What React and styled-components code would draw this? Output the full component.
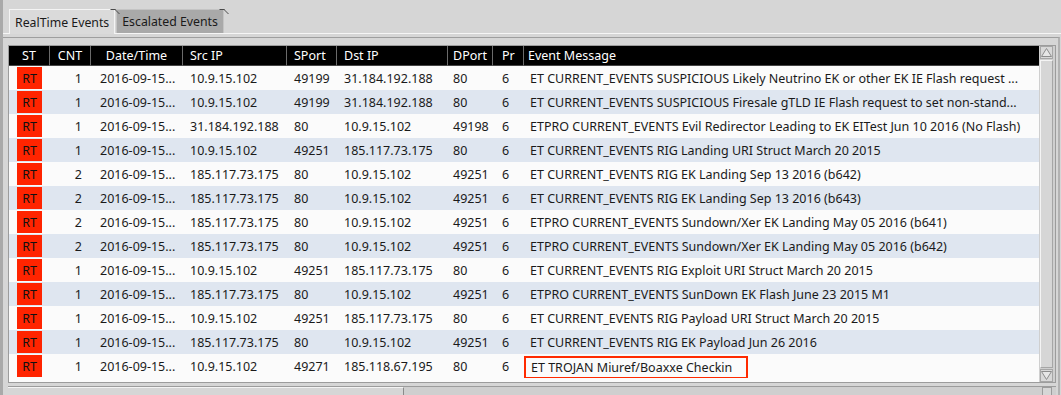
import React from 'react'
import styled, { createGlobalStyle } from 'styled-components'

const GlobalStyle = createGlobalStyle`
  html, body {
    margin: 0;
    padding: 0;
    background: #d6d6d6;
    overflow: hidden;
  }
  body {
    font-family: "Noto Sans", "Open Sans", sans-serif;
    font-size: 12px;
    color: #111;
  }
`

const Window = styled.div`
  width: 1061px;
  height: 395px;
  box-sizing: border-box;
  border-left: 3px solid #a9a9a9;
  background: #d6d6d6;
  overflow: hidden;
`

const TabBar = styled.div`
  display: flex;
  padding: 9px 0 0 6px;
  height: 24px;
`

const Tab = styled.div`
  position: relative;
  display: flex;
  align-items: center;
  box-sizing: border-box;
  padding: 0 5px 0 5px;
  margin-right: 1px;
  font-size: 12.3px;
  color: #1a1a1a;
  background: ${p => (p.$active ? '#dadada' : '#a9a9a9')};
  border: 1px solid ${p => (p.$active ? '#f4f4f4' : '#c4c4c4')};
  border-bottom: none;
  z-index: ${p => (p.$active ? 2 : 1)};
  margin-bottom: ${p => (p.$active ? '-1px' : '0')};
  height: ${p => (p.$active ? '25px' : '24px')};

  &::after {
    content: '';
    position: absolute;
    top: -1px;
    right: -1px;
    width: 4px;
    height: 4px;
    border-top: 1px solid #4a4a4a;
    border-right: 1px solid #4a4a4a;
    transform: skewX(45deg);
    transform-origin: top left;
  }
`

const Pane = styled.div`
  border-top: 1px solid #f6f6f6;
  padding-top: 3px;
`

const Frame = styled.div`
  margin-right: 1px;
  border-top: 1px solid #9e9e9e;
  border-right: 2px solid #b2b2b2;
  padding: 7px 0 0 5px;
  height: 360px;
  box-sizing: border-box;
`

const ListBox = styled.div`
  display: flex;
  width: 1048px;
  height: 338px;
  box-sizing: border-box;
  border: 1px solid #9c9c9c;
  background: #cfcfcf;
`

const Viewport = styled.div`
  width: 1032px;
  height: 336px;
  background: #fbfbfb;
  overflow: hidden;
`

const Grid = styled.div`
  display: grid;
  grid-template-columns: 41px 41px 92px 104px 50px 111px 45px 31px 517px;
`

const HeadCell = styled.div`
  height: 20px;
  display: flex;
  align-items: center;
  justify-content: ${p => p.$align || 'flex-start'};
  padding-left: ${p => p.$pl || 0}px;
  background: #000;
  color: #fff;
  font-size: 12.5px;
  border-right: 1px solid #6a6a6a;
  border-bottom: 1px solid #444;
  box-sizing: border-box;
  white-space: nowrap;

  &:last-child {
    border-right: none;
  }
`

const Cell = styled.div`
  height: 24px;
  display: flex;
  align-items: ${p => (p.$top ? 'flex-start' : 'center')};
  justify-content: ${p => p.$align || 'flex-start'};
  padding-left: ${p => p.$pl || 0}px;
  padding-right: ${p => p.$pr || 0}px;
  background: ${p => (p.$alt ? '#dfe6f0' : '#fbfbfb')};
  font-size: 12.5px;
  color: #1a1a1a;
  white-space: nowrap;
  overflow: hidden;
  box-sizing: border-box;
`

const Badge = styled.div`
  width: 25px;
  height: 22px;
  margin-left: 8px;
  display: flex;
  align-items: center;
  justify-content: center;
  background: #ff2400;
  color: #111;
  font-size: 12.5px;
`

const Highlight = styled.div`
  height: 23px;
  display: flex;
  align-items: center;
  box-sizing: border-box;
  margin-top: 2px;
  padding: 0 10px 0 5px;
  border: 2px solid #ff2a00;
  width: 224px;
`

const VScroll = styled.div`
  flex: 1;
  display: flex;
  flex-direction: column;
  padding: 0 2px 0 1px;
  background: #cfcfcf;
`

const ArrowBox = styled.div`
  height: 11px;
  display: flex;
  align-items: center;
  justify-content: center;
  border: 1px solid #a6a6a6;
  background: #d8d8d8;
`

const Slider = styled.div`
  flex: 1;
  margin: 1px 0;
  border: 1px solid #a6a6a6;
  border-top-color: #f4f4f4;
  border-left-color: #f4f4f4;
  background: #d6d6d6;
`

const HScroll = styled.div`
  display: flex;
  margin-top: 3px;
  height: 12px;
  width: 1048px;
  border-top: 1px solid #9c9c9c;
  background: #cfcfcf;
`

const HSlider = styled.div`
  width: 395px;
  border-top: 1px solid #f4f4f4;
  border-right: 1px solid #8a8a8a;
  background: #d6d6d6;
`

const Corner = styled.div`
  margin-left: auto;
  margin-right: 4px;
  width: 8px;
  border: 1px solid #9c9c9c;
  border-bottom: none;
  background: #d6d6d6;
`

const Arrow = ({ down }) => (
  <svg width="11" height="9" viewBox="0 0 11 9">
    <polygon
      points={down ? '0.5,0.5 10.5,0.5 5.5,8.5' : '5.5,0.5 10.5,8.5 0.5,8.5'}
      fill="#e6e6e6"
      stroke="#8c8c8c"
      strokeWidth="1"
    />
  </svg>
)

const columns = [
  { title: 'ST', align: 'center' },
  { title: 'CNT', align: 'center' },
  { title: 'Date/Time', align: 'center' },
  { title: 'Src IP', pl: 7 },
  { title: 'SPort', pl: 7 },
  { title: 'Dst IP', pl: 7 },
  { title: 'DPort', pl: 5 },
  { title: 'Pr', pl: 9 },
  { title: 'Event Message', pl: 4 },
]

const A = '10.9.15.102'
const B = '185.117.73.175'
const C = '31.184.192.188'

const events = [
  [1, A, 49199, C, 80, 'ET CURRENT_EVENTS SUSPICIOUS Likely Neutrino EK or other EK IE Flash request ...'],
  [1, A, 49199, C, 80, 'ET CURRENT_EVENTS SUSPICIOUS Firesale gTLD IE Flash request to set non-stand...'],
  [1, C, 80, A, 49198, 'ETPRO CURRENT_EVENTS Evil Redirector Leading to EK EITest Jun 10 2016 (No Flash)'],
  [1, A, 49251, B, 80, 'ET CURRENT_EVENTS RIG Landing URI Struct March 20 2015'],
  [2, B, 80, A, 49251, 'ET CURRENT_EVENTS RIG EK Landing Sep 13 2016 (b642)'],
  [2, B, 80, A, 49251, 'ET CURRENT_EVENTS RIG EK Landing Sep 13 2016 (b643)'],
  [2, B, 80, A, 49251, 'ETPRO CURRENT_EVENTS Sundown/Xer EK Landing May 05 2016 (b641)'],
  [2, B, 80, A, 49251, 'ETPRO CURRENT_EVENTS Sundown/Xer EK Landing May 05 2016 (b642)'],
  [1, A, 49251, B, 80, 'ET CURRENT_EVENTS RIG Exploit URI Struct March 20 2015'],
  [1, B, 80, A, 49251, 'ETPRO CURRENT_EVENTS SunDown EK Flash June 23 2015 M1'],
  [1, A, 49251, B, 80, 'ET CURRENT_EVENTS RIG Payload URI Struct March 20 2015'],
  [1, B, 80, A, 49251, 'ET CURRENT_EVENTS RIG EK Payload Jun 26 2016'],
  [1, A, 49271, '185.118.67.195', 80, 'ET TROJAN Miuref/Boaxxe Checkin', true],
]

const App = () => (
  <>
    <GlobalStyle />
    <Window>
      <TabBar>
        <Tab $active>RealTime Events</Tab>
        <Tab>Escalated Events</Tab>
      </TabBar>
      <Pane>
        <Frame>
          <ListBox>
            <Viewport>
              <Grid>
                {columns.map(col => (
                  <HeadCell key={col.title} $align={col.align} $pl={col.pl}>
                    {col.title}
                  </HeadCell>
                ))}
                {events.map(([cnt, src, sport, dst, dport, msg, flagged], i) => {
                  const alt = i % 2 === 1
                  return (
                    <React.Fragment key={i}>
                      <Cell $alt={alt}>
                        <Badge>RT</Badge>
                      </Cell>
                      <Cell $alt={alt} $align="flex-end" $pr={9}>{cnt}</Cell>
                      <Cell $alt={alt} $pl={9}>2016-09-15...</Cell>
                      <Cell $alt={alt} $pl={7}>{src}</Cell>
                      <Cell $alt={alt} $pl={7}>{sport}</Cell>
                      <Cell $alt={alt} $pl={7}>{dst}</Cell>
                      <Cell $alt={alt} $pl={5}>{dport}</Cell>
                      <Cell $alt={alt} $pl={9}>6</Cell>
                      {flagged ? (
                        <Cell $alt={alt} $top>
                          <Highlight>{msg}</Highlight>
                        </Cell>
                      ) : (
                        <Cell $alt={alt} $pl={6}>{msg}</Cell>
                      )}
                    </React.Fragment>
                  )
                })}
              </Grid>
            </Viewport>
            <VScroll>
              <ArrowBox><Arrow /></ArrowBox>
              <Slider />
              <ArrowBox><Arrow down /></ArrowBox>
            </VScroll>
          </ListBox>
          <HScroll>
            <HSlider />
            <Corner />
          </HScroll>
        </Frame>
      </Pane>
    </Window>
  </>
)

export default App
